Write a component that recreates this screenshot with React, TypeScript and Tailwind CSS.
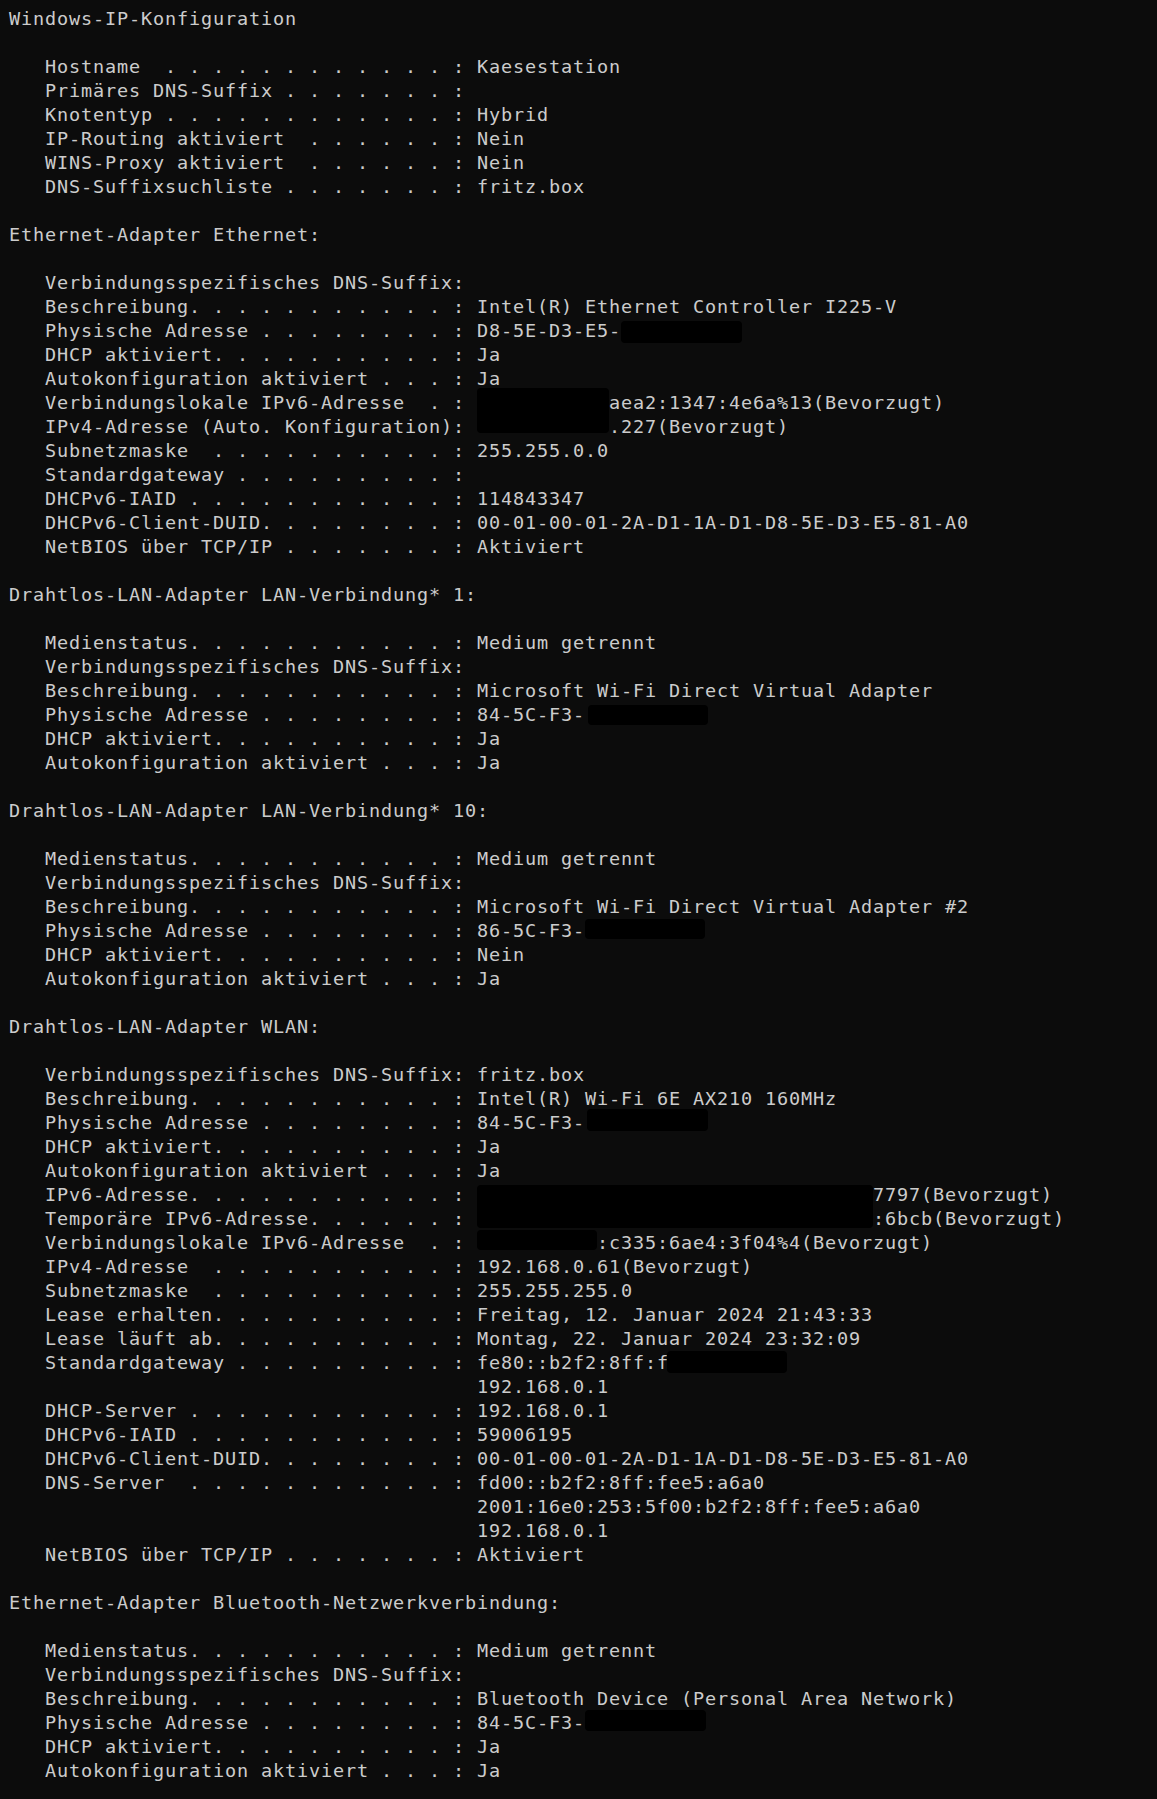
import React from "react";

// a blacked-out chunk of text, sits in the line flow
type Box = { w: number; h: number; mt?: number; ml?: number; ghost?: boolean };
type Seg = string | Box;
type Row = string | [string, number, Seg[] | string] | Seg[];

// label padded to 34 chars: name + gap spaces + ". " pairs
const lbl = (name: string, gap: number) => {
  const rest = 34 - name.length - gap;
  return name + " ".repeat(gap) + ". ".repeat(Math.max(0, rest / 2));
};

const indent = " ".repeat(39);

const rows: Row[] = [
  "Windows-IP-Konfiguration",
  "",
  ["Hostname", 2, "Kaesestation"],
  ["Primäres DNS-Suffix", 1, ""],
  ["Knotentyp", 1, "Hybrid"],
  ["IP-Routing aktiviert", 2, "Nein"],
  ["WINS-Proxy aktiviert", 2, "Nein"],
  ["DNS-Suffixsuchliste", 1, "fritz.box"],
  "",
  "Ethernet-Adapter Ethernet:",
  "",
  ["Verbindungsspezifisches DNS-Suffix", 0, ""],
  ["Beschreibung", 0, "Intel(R) Ethernet Controller I225-V"],
  ["Physische Adresse", 1, ["D8-5E-D3-E5-", { w: 121, h: 22, mt: 2.5 }]],
  ["DHCP aktiviert", 0, "Ja"],
  ["Autokonfiguration aktiviert", 1, "Ja"],
  ["Verbindungslokale IPv6-Adresse", 2, [{ w: 132, h: 45, mt: -2.5 }, "aea2:1347:4e6a%13(Bevorzugt)"]],
  ["IPv4-Adresse (Auto. Konfiguration)", 0, [{ w: 132, h: 0, ghost: true }, ".227(Bevorzugt)"]],
  ["Subnetzmaske", 2, "255.255.0.0"],
  ["Standardgateway", 1, ""],
  ["DHCPv6-IAID", 1, "114843347"],
  ["DHCPv6-Client-DUID", 0, "00-01-00-01-2A-D1-1A-D1-D8-5E-D3-E5-81-A0"],
  ["NetBIOS über TCP/IP", 1, "Aktiviert"],
  "",
  "Drahtlos-LAN-Adapter LAN-Verbindung* 1:",
  "",
  ["Medienstatus", 0, "Medium getrennt"],
  ["Verbindungsspezifisches DNS-Suffix", 0, ""],
  ["Beschreibung", 0, "Microsoft Wi-Fi Direct Virtual Adapter"],
  ["Physische Adresse", 1, ["84-5C-F3-", { w: 120, h: 20, mt: 2.5, ml: 3 }]],
  ["DHCP aktiviert", 0, "Ja"],
  ["Autokonfiguration aktiviert", 1, "Ja"],
  "",
  "Drahtlos-LAN-Adapter LAN-Verbindung* 10:",
  "",
  ["Medienstatus", 0, "Medium getrennt"],
  ["Verbindungsspezifisches DNS-Suffix", 0, ""],
  ["Beschreibung", 0, "Microsoft Wi-Fi Direct Virtual Adapter #2"],
  ["Physische Adresse", 1, ["86-5C-F3-", { w: 120, h: 20, mt: 0.5 }]],
  ["DHCP aktiviert", 0, "Nein"],
  ["Autokonfiguration aktiviert", 1, "Ja"],
  "",
  "Drahtlos-LAN-Adapter WLAN:",
  "",
  ["Verbindungsspezifisches DNS-Suffix", 0, "fritz.box"],
  ["Beschreibung", 0, "Intel(R) Wi-Fi 6E AX210 160MHz"],
  ["Physische Adresse", 1, ["84-5C-F3-", { w: 121, h: 22, mt: -1.5, ml: 2 }]],
  ["DHCP aktiviert", 0, "Ja"],
  ["Autokonfiguration aktiviert", 1, "Ja"],
  ["IPv6-Adresse", 0, [{ w: 396, h: 43, mt: 2.5 }, "7797(Bevorzugt)"]],
  ["Temporäre IPv6-Adresse", 0, [{ w: 396, h: 0, ghost: true }, ":6bcb(Bevorzugt)"]],
  ["Verbindungslokale IPv6-Adresse", 2, [{ w: 120, h: 20, mt: -0.5 }, ":c335:6ae4:3f04%4(Bevorzugt)"]],
  ["IPv4-Adresse", 2, "192.168.0.61(Bevorzugt)"],
  ["Subnetzmaske", 2, "255.255.255.0"],
  ["Lease erhalten", 0, "Freitag, 12. Januar 2024 21:43:33"],
  ["Lease läuft ab", 0, "Montag, 22. Januar 2024 23:32:09"],
  ["Standardgateway", 1, ["fe80::b2f2:8ff:f", { w: 120, h: 22, mt: 0.5, ml: -2 }]],
  indent + "192.168.0.1",
  ["DHCP-Server", 1, "192.168.0.1"],
  ["DHCPv6-IAID", 1, "59006195"],
  ["DHCPv6-Client-DUID", 0, "00-01-00-01-2A-D1-1A-D1-D8-5E-D3-E5-81-A0"],
  ["DNS-Server", 2, "fd00::b2f2:8ff:fee5:a6a0"],
  indent + "2001:16e0:253:5f00:b2f2:8ff:fee5:a6a0",
  indent + "192.168.0.1",
  ["NetBIOS über TCP/IP", 1, "Aktiviert"],
  "",
  "Ethernet-Adapter Bluetooth-Netzwerkverbindung:",
  "",
  ["Medienstatus", 0, "Medium getrennt"],
  ["Verbindungsspezifisches DNS-Suffix", 0, ""],
  ["Beschreibung", 0, "Bluetooth Device (Personal Area Network)"],
  ["Physische Adresse", 1, ["84-5C-F3-", { w: 121, h: 21, mt: -0.5 }]],
  ["DHCP aktiviert", 0, "Ja"],
  ["Autokonfiguration aktiviert", 1, "Ja"],
];

const toSegs = (r: Row): Seg[] => {
  if (typeof r === "string") return [r];
  if (typeof r[0] === "string" && typeof r[1] === "number") {
    const [name, gap, val] = r as [string, number, Seg[] | string];
    const head = "   " + lbl(name, gap) + ": ";
    return typeof val === "string" ? [head + val] : [head, ...val];
  }
  return r as Seg[];
};

function Redact({ b }: { b: Box }) {
  return (
    <span
      className={b.ghost ? "shrink-0" : "shrink-0 rounded-[4px] bg-black"}
      style={{ width: b.w, height: b.h, marginTop: b.mt ?? 0, marginLeft: b.ml ?? 0, marginRight: -(b.ml ?? 0) }}
    />
  );
}

export default function App() {
  return (
    <div className="min-h-screen w-full bg-[#0c0c0c]">
      <div className="flex flex-col pl-[9px] pt-[6.5px] text-[18.5px] leading-[24px] tracking-[0.863px] text-[#cccccc] font-['DejaVu_Sans_Mono',monospace]">
        {rows.map((r, i) => (
          <div key={i} className="flex h-[24px] items-start whitespace-pre">
            {toSegs(r).map((s, j) =>
              typeof s === "string" ? <span key={j}>{s}</span> : <Redact key={j} b={s} />
            )}
          </div>
        ))}
      </div>
    </div>
  );
}
